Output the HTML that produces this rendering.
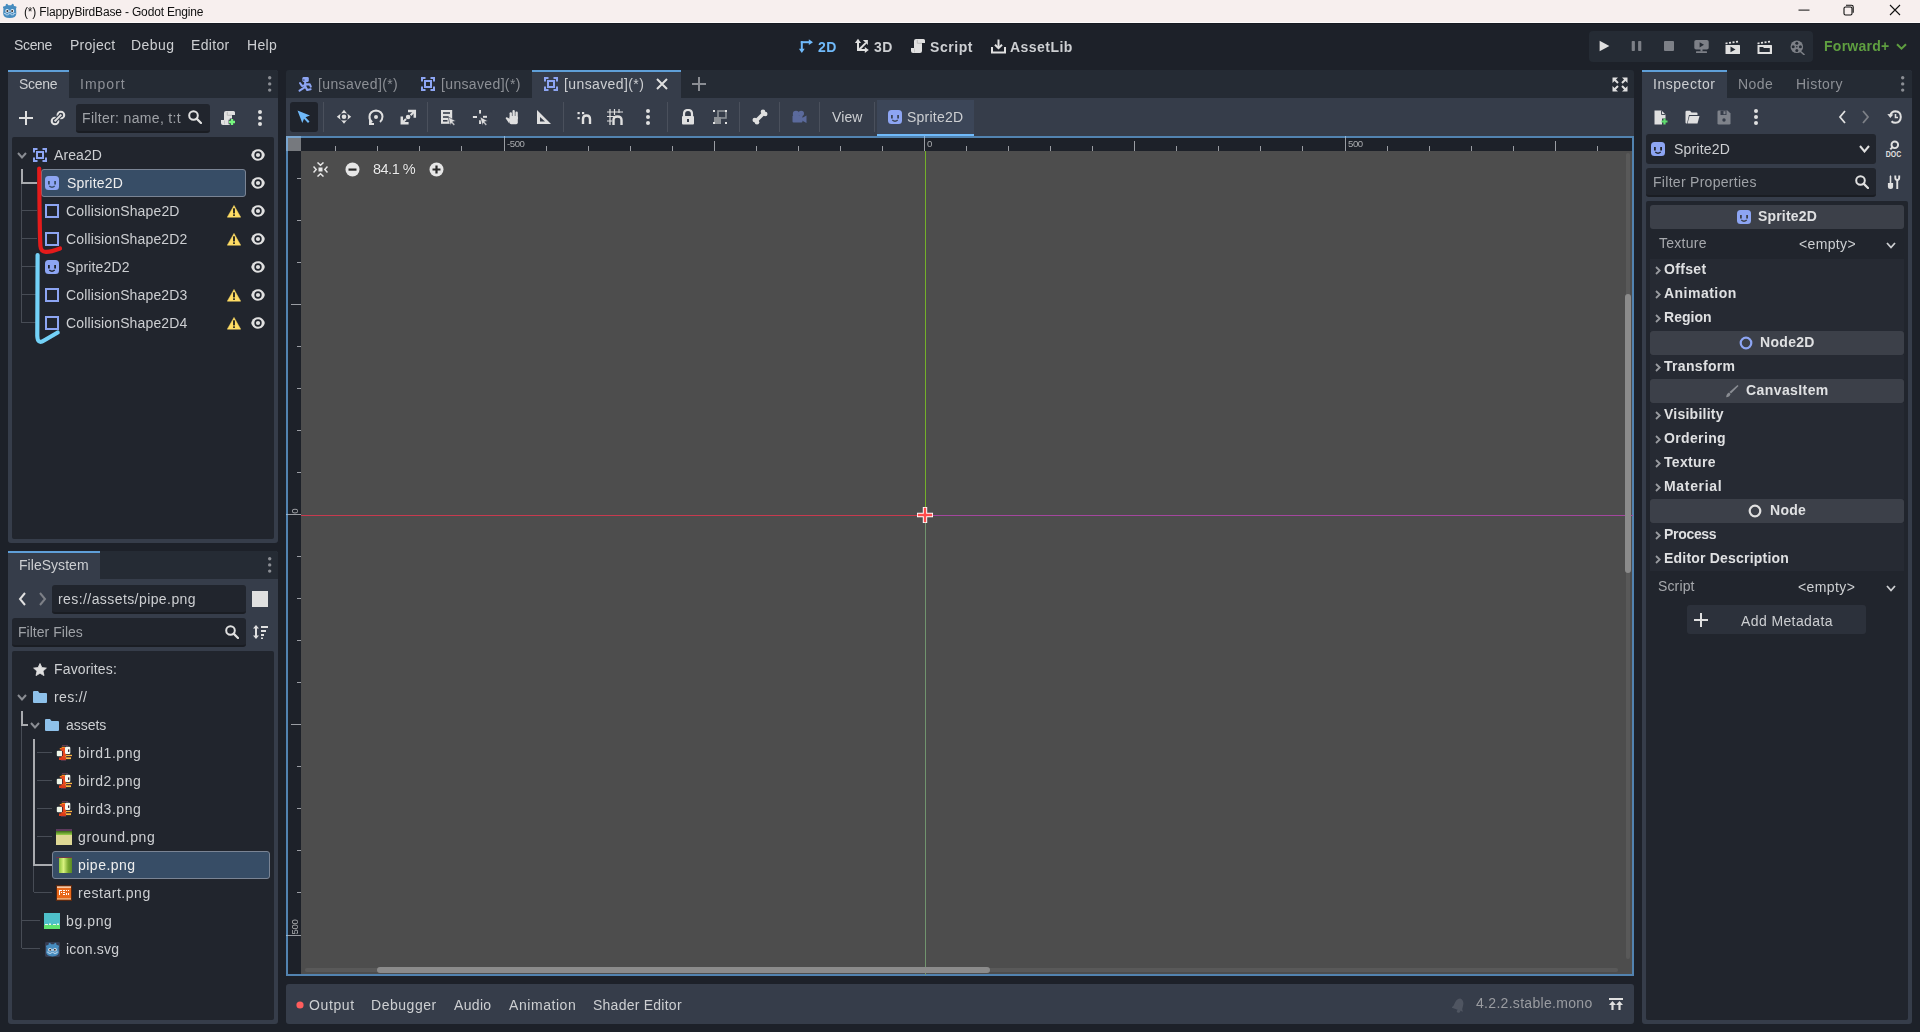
<!DOCTYPE html><html><head><meta charset="utf-8"><style>
html,body{margin:0;padding:0;width:1920px;height:1032px;overflow:hidden;background:#1d2129;}
body>div,body>svg{position:absolute;}
.t{white-space:pre;font-family:"Liberation Sans",sans-serif;will-change:transform;}
</style></head><body>
<div style="left:0px;top:0px;width:1920px;height:22px;background:#f7efee;"></div>
<div style="left:0px;top:22px;width:1920px;height:1px;background:#fdfafa;"></div>
<div style="left:0px;top:23px;width:1920px;height:1px;background:#161a21;"></div>
<div class="t" style="left:24.4px;top:5.84px;font-size:12px;line-height:12px;color:#111;font-weight:400;;letter-spacing:-0.163px;">(*) FlappyBirdBase - Godot Engine</div>
<div class="t" style="left:14.4px;top:38.15px;font-size:14px;line-height:14px;color:#cdcfd2;font-weight:400;;letter-spacing:-0.341px;">Scene</div>
<div class="t" style="left:69.5px;top:38.15px;font-size:14px;line-height:14px;color:#cdcfd2;font-weight:400;;letter-spacing:0.246px;">Project</div>
<div class="t" style="left:131.2px;top:38.15px;font-size:14px;line-height:14px;color:#cdcfd2;font-weight:400;;letter-spacing:0.447px;">Debug</div>
<div class="t" style="left:191.4px;top:38.15px;font-size:14px;line-height:14px;color:#cdcfd2;font-weight:400;;letter-spacing:0.337px;">Editor</div>
<div class="t" style="left:247.2px;top:38.15px;font-size:14px;line-height:14px;color:#cdcfd2;font-weight:400;;letter-spacing:0.326px;">Help</div>
<div class="t" style="left:818.3px;top:40.15px;font-size:14px;line-height:14px;color:#70bafa;font-weight:700;;letter-spacing:0.397px;">2D</div>
<div class="t" style="left:874px;top:40.15px;font-size:14px;line-height:14px;color:#cdcfd2;font-weight:700;;letter-spacing:0.547px;">3D</div>
<div class="t" style="left:930px;top:40.15px;font-size:14px;line-height:14px;color:#cdcfd2;font-weight:700;;letter-spacing:0.552px;">Script</div>
<div class="t" style="left:1010px;top:40.15px;font-size:14px;line-height:14px;color:#cdcfd2;font-weight:700;;letter-spacing:0.459px;">AssetLib</div>
<div style="left:1589px;top:31px;width:224px;height:31px;background:#252b34;border-radius:4px;"></div>
<div class="t" style="left:1823.5px;top:39.45px;font-size:14px;line-height:14px;color:#5f9f40;font-weight:700;;letter-spacing:0.262px;">Forward+</div>
<div style="left:8px;top:70px;width:270px;height:473px;background:#363d4a;border-radius:3px;"></div>
<div style="left:8px;top:70px;width:270px;height:28px;background:#252b34;border-radius:3px 3px 0 0;"></div>
<div style="left:8px;top:70px;width:61px;height:28px;background:#363d4a;"></div>
<div style="left:8px;top:70px;width:61px;height:2px;background:#5f9fd8;"></div>
<div class="t" style="left:19.2px;top:77.15px;font-size:14px;line-height:14px;color:#cdcfd2;font-weight:400;;letter-spacing:-0.301px;">Scene</div>
<div class="t" style="left:80px;top:77.15px;font-size:14px;line-height:14px;color:#8d9096;font-weight:400;;letter-spacing:1.002px;">Import</div>
<div style="left:76px;top:104px;width:134px;height:29px;background:#21252d;border-radius:3px;border-bottom:2px solid #1a1d23;box-sizing:border-box;"></div>
<div class="t" style="left:82.3px;top:111.35px;font-size:14px;line-height:14px;color:#9fa2a7;font-weight:400;;letter-spacing:0.332px;">Filter: name, t:t</div>
<div style="left:12px;top:137px;width:262px;height:402px;background:#21252d;border-radius:2px;"></div>
<div style="left:41px;top:169px;width:205px;height:28px;background:#374d66;border:1px solid #7a8494;border-radius:3px;box-sizing:border-box;"></div>
<div class="t" style="left:54px;top:147.65px;font-size:14px;line-height:14px;color:#cdcfd2;font-weight:400;;letter-spacing:0.089px;">Area2D</div>
<div class="t" style="left:66.5px;top:175.65px;font-size:14px;line-height:14px;color:#eeeeee;font-weight:400;;letter-spacing:0.191px;">Sprite2D</div>
<div class="t" style="left:66.4px;top:203.65px;font-size:14px;line-height:14px;color:#cdcfd2;font-weight:400;;letter-spacing:0.144px;">CollisionShape2D</div>
<div class="t" style="left:66.4px;top:231.65px;font-size:14px;line-height:14px;color:#cdcfd2;font-weight:400;;letter-spacing:0.137px;">CollisionShape2D2</div>
<div class="t" style="left:66.4px;top:259.65px;font-size:14px;line-height:14px;color:#cdcfd2;font-weight:400;;letter-spacing:0.159px;">Sprite2D2</div>
<div class="t" style="left:66.4px;top:287.65px;font-size:14px;line-height:14px;color:#cdcfd2;font-weight:400;;letter-spacing:0.137px;">CollisionShape2D3</div>
<div class="t" style="left:66.4px;top:315.65px;font-size:14px;line-height:14px;color:#cdcfd2;font-weight:400;;letter-spacing:0.137px;">CollisionShape2D4</div>
<div style="left:8px;top:551px;width:270px;height:473px;background:#363d4a;border-radius:3px;"></div>
<div style="left:8px;top:551px;width:270px;height:28px;background:#252b34;border-radius:3px 3px 0 0;"></div>
<div style="left:8px;top:551px;width:92px;height:28px;background:#363d4a;"></div>
<div style="left:8px;top:551px;width:92px;height:2px;background:#5f9fd8;"></div>
<div class="t" style="left:19px;top:558.35px;font-size:14px;line-height:14px;color:#cdcfd2;font-weight:400;;letter-spacing:0.037px;">FileSystem</div>
<div style="left:52px;top:585px;width:194px;height:29px;background:#21252d;border-radius:3px;border-bottom:2px solid #1a1d23;box-sizing:border-box;"></div>
<div class="t" style="left:58.2px;top:592.45px;font-size:14px;line-height:14px;color:#cdcfd2;font-weight:400;;letter-spacing:0.420px;">res://assets/pipe.png</div>
<div style="left:252px;top:591px;width:16px;height:16px;background:#e0e0e0;"></div>
<div style="left:12px;top:618px;width:234px;height:29px;background:#21252d;border-radius:3px;border-bottom:2px solid #1a1d23;box-sizing:border-box;"></div>
<div class="t" style="left:18.4px;top:625.35px;font-size:14px;line-height:14px;color:#9fa2a7;font-weight:400;;letter-spacing:0.028px;">Filter Files</div>
<div style="left:12px;top:651px;width:262px;height:369px;background:#21252d;border-radius:2px;"></div>
<div style="left:52px;top:851px;width:218px;height:28px;background:#374d66;border:1px solid #7a8494;border-radius:3px;box-sizing:border-box;"></div>
<div class="t" style="left:54.3px;top:661.65px;font-size:14px;line-height:14px;color:#cdcfd2;font-weight:400;;letter-spacing:0.153px;">Favorites:</div>
<div class="t" style="left:54.3px;top:689.65px;font-size:14px;line-height:14px;color:#cdcfd2;font-weight:400;;letter-spacing:0.362px;">res://</div>
<div class="t" style="left:66.3px;top:717.65px;font-size:14px;line-height:14px;color:#cdcfd2;font-weight:400;;letter-spacing:-0.028px;">assets</div>
<div class="t" style="left:78.1px;top:745.65px;font-size:14px;line-height:14px;color:#cdcfd2;font-weight:400;;letter-spacing:0.557px;">bird1.png</div>
<div class="t" style="left:78.1px;top:773.65px;font-size:14px;line-height:14px;color:#cdcfd2;font-weight:400;;letter-spacing:0.557px;">bird2.png</div>
<div class="t" style="left:78.1px;top:801.65px;font-size:14px;line-height:14px;color:#cdcfd2;font-weight:400;;letter-spacing:0.557px;">bird3.png</div>
<div class="t" style="left:78.1px;top:829.65px;font-size:14px;line-height:14px;color:#cdcfd2;font-weight:400;;letter-spacing:0.666px;">ground.png</div>
<div class="t" style="left:78.1px;top:857.65px;font-size:14px;line-height:14px;color:#eeeeee;font-weight:400;;letter-spacing:0.485px;">pipe.png</div>
<div class="t" style="left:78.1px;top:885.65px;font-size:14px;line-height:14px;color:#cdcfd2;font-weight:400;;letter-spacing:0.524px;">restart.png</div>
<div class="t" style="left:66.1px;top:913.65px;font-size:14px;line-height:14px;color:#cdcfd2;font-weight:400;;letter-spacing:0.595px;">bg.png</div>
<div class="t" style="left:66.1px;top:941.65px;font-size:14px;line-height:14px;color:#cdcfd2;font-weight:400;;letter-spacing:0.243px;">icon.svg</div>
<div style="left:286px;top:70px;width:1348px;height:28px;background:#252b34;border-radius:3px 3px 0 0;"></div>
<div style="left:532px;top:70px;width:149px;height:28px;background:#363d4a;"></div>
<div style="left:532px;top:70px;width:149px;height:2px;background:#5f9fd8;"></div>
<div class="t" style="left:317.6px;top:76.55px;font-size:14px;line-height:14px;color:#8d9096;font-weight:400;;letter-spacing:0.385px;">[unsaved](*)</div>
<div class="t" style="left:440.7px;top:76.55px;font-size:14px;line-height:14px;color:#8d9096;font-weight:400;;letter-spacing:0.351px;">[unsaved](*)</div>
<div class="t" style="left:563.7px;top:76.55px;font-size:14px;line-height:14px;color:#cdcfd2;font-weight:400;;letter-spacing:0.393px;">[unsaved](*)</div>
<div style="left:286px;top:98px;width:1348px;height:38px;background:#363d4a;"></div>
<div style="left:290px;top:102px;width:28px;height:30px;background:#1f232b;border-radius:3px;"></div>
<div style="left:323px;top:102px;width:1px;height:30px;background:#4a505c;"></div>
<div style="left:427px;top:102px;width:1px;height:30px;background:#4a505c;"></div>
<div style="left:563px;top:102px;width:1px;height:30px;background:#4a505c;"></div>
<div style="left:667px;top:102px;width:1px;height:30px;background:#4a505c;"></div>
<div style="left:739px;top:102px;width:1px;height:30px;background:#4a505c;"></div>
<div style="left:779px;top:102px;width:1px;height:30px;background:#4a505c;"></div>
<div style="left:819px;top:102px;width:1px;height:30px;background:#4a505c;"></div>
<div style="left:874px;top:102px;width:1px;height:30px;background:#4a505c;"></div>
<div class="t" style="left:832.2px;top:110.15px;font-size:14px;line-height:14px;color:#cdcfd2;font-weight:400;;letter-spacing:0.102px;">View</div>
<div style="left:877px;top:100px;width:97px;height:36px;background:#3c4658;"></div>
<div style="left:877px;top:134px;width:97px;height:2px;background:#70bafa;"></div>
<div class="t" style="left:907px;top:110.15px;font-size:14px;line-height:14px;color:#cdcfd2;font-weight:400;;letter-spacing:0.241px;">Sprite2D</div>
<div style="left:286px;top:136px;width:1348px;height:840px;background:#5283b0;"></div>
<div style="left:288px;top:138px;width:1344px;height:836px;background:#4d4d4d;"></div>
<div style="left:288px;top:138px;width:1344px;height:13px;background:#1d2129;"></div>
<div style="left:288px;top:138px;width:13px;height:836px;background:#1d2129;"></div>
<div style="left:288px;top:138px;width:13px;height:13px;background:#76797e;"></div>
<div style="left:286px;top:136px;width:15px;height:2px;background:#79a5cf;"></div>
<div style="left:286px;top:136px;width:2px;height:15px;background:#79a5cf;"></div>
<div style="left:286px;top:984px;width:1348px;height:40px;background:#363d4a;border-radius:3px;"></div>
<div class="t" style="left:308.7px;top:997.95px;font-size:14px;line-height:14px;color:#cdcfd2;font-weight:400;;letter-spacing:0.611px;">Output</div>
<div class="t" style="left:371.2px;top:997.95px;font-size:14px;line-height:14px;color:#cdcfd2;font-weight:400;;letter-spacing:0.525px;">Debugger</div>
<div class="t" style="left:454px;top:997.95px;font-size:14px;line-height:14px;color:#cdcfd2;font-weight:400;;letter-spacing:0.338px;">Audio</div>
<div class="t" style="left:509px;top:997.95px;font-size:14px;line-height:14px;color:#cdcfd2;font-weight:400;;letter-spacing:0.559px;">Animation</div>
<div class="t" style="left:593px;top:997.95px;font-size:14px;line-height:14px;color:#cdcfd2;font-weight:400;;letter-spacing:0.245px;">Shader Editor</div>
<div class="t" style="left:1476.2px;top:996.05px;font-size:14px;line-height:14px;color:#9a9ca1;font-weight:400;;letter-spacing:0.306px;">4.2.2.stable.mono</div>
<div style="left:1642px;top:70px;width:270px;height:954px;background:#363d4a;border-radius:3px;"></div>
<div style="left:1642px;top:70px;width:270px;height:28px;background:#252b34;border-radius:3px 3px 0 0;"></div>
<div style="left:1642px;top:70px;width:85px;height:28px;background:#363d4a;"></div>
<div style="left:1642px;top:70px;width:85px;height:2px;background:#5f9fd8;"></div>
<div class="t" style="left:1652.9px;top:77.15px;font-size:14px;line-height:14px;color:#cdcfd2;font-weight:400;;letter-spacing:0.534px;">Inspector</div>
<div class="t" style="left:1738.2px;top:77.15px;font-size:14px;line-height:14px;color:#8d9096;font-weight:400;;letter-spacing:0.433px;">Node</div>
<div class="t" style="left:1796.3px;top:77.15px;font-size:14px;line-height:14px;color:#8d9096;font-weight:400;;letter-spacing:0.477px;">History</div>
<div style="left:1646px;top:134px;width:230px;height:30px;background:#21252d;border-radius:3px;"></div>
<div class="t" style="left:1674.3px;top:141.85px;font-size:14px;line-height:14px;color:#cdcfd2;font-weight:400;;letter-spacing:0.191px;">Sprite2D</div>
<div style="left:1646px;top:168px;width:230px;height:29px;background:#21252d;border-radius:3px;border-bottom:2px solid #1a1d23;box-sizing:border-box;"></div>
<div class="t" style="left:1652.5px;top:175.45px;font-size:14px;line-height:14px;color:#9fa2a7;font-weight:400;;letter-spacing:0.288px;">Filter Properties</div>
<div style="left:1646px;top:201px;width:262px;height:819px;background:#21252d;border-radius:2px;"></div>
<svg style="left:2px;top:3px" width="15.5" height="15.5" viewBox="0 0 16 16"><g transform="translate(0,0)"><path d="M1.5 5.8 Q0.2 3.8 2.2 3.4 L3.6 3.2 Q3.7 0.6 5.3 0.7 L6.6 2.3 H9.4 L10.7 0.7 Q12.3 0.6 12.4 3.2 L13.8 3.4 Q15.8 3.8 14.5 5.8 L14.8 11 Q14.6 15.3 8 15.4 Q1.4 15.3 1.2 11 Z" fill="#478cbf"/><circle cx="5.3" cy="8.2" r="1.9" fill="#e8f0f8"/><circle cx="10.7" cy="8.2" r="1.9" fill="#e8f0f8"/><circle cx="5.5" cy="8.3" r="1" fill="#332b2b"/><circle cx="10.5" cy="8.3" r="1" fill="#332b2b"/><rect x="7.3" y="7.6" width="1.4" height="1.8" fill="#b8d4ec"/><path d="M2 10.8 H4 V12.2 H6.5 V11 H9.5 V12.2 H12 V10.8 H14" fill="none" stroke="#b8d4ec" stroke-width="1"/></g></svg>
<svg style="left:1798px;top:9px;" width="12" height="2" viewBox="0 0 12 2"><rect x="0.5" y="0.6" width="11" height="1" fill="#111"/></svg>
<svg style="left:1843px;top:4px;" width="11" height="12" viewBox="0 0 11 12"><rect x="1" y="3" width="8" height="8" rx="1.5" fill="none" stroke="#111" stroke-width="1.1"/><path d="M3 1.2 H8.5 Q10.2 1.2 10.2 3 V8.8" fill="none" stroke="#111" stroke-width="1.1"/></svg>
<svg style="left:1889px;top:4px;" width="12" height="12" viewBox="0 0 12 12"><path d="M1 1 L11 11 M11 1 L1 11" stroke="#111" stroke-width="1.1"/></svg>
<svg style="left:797px;top:37px;" width="17" height="17" viewBox="0 0 17 17"><g fill="#70bafa"><rect x="3.8" y="4.2" width="2" height="8.5"/><rect x="3.8" y="4.2" width="8.8" height="2"/><path d="M1.9 11.8 H7.7 L4.8 16 Z"/><path d="M11.8 2.3 V8.1 L16 5.2 Z"/></g></svg>
<svg style="left:852px;top:37px;" width="17" height="17" viewBox="0 0 17 17"><g fill="#e0e0e0"><rect x="5" y="5.5" width="2" height="8.5"/><path d="M2.9 6 H9 L6 1.8 Z"/><rect x="5" y="12" width="8.2" height="2"/><path d="M12.8 10 V16 L16.8 13 Z"/><path d="M6.8 11.6 L13.2 5.2 L14.6 6.6 L8.2 13 Z"/><path d="M15.9 3 V8 L10.9 3 Z"/></g></svg>
<svg style="left:910px;top:38px;" width="17" height="17" viewBox="0 0 17 17"><path d="M4 3 Q4 1 6 1 H13.5 Q15 1 15 2.6 V5 H12 V13 Q12 15 10 15 H3 Q1 15 1 13 V10 H4 Z" fill="#e0e0e0"/><path d="M7.3 1.8 V5.3 H12" fill="none" stroke="#b9b9b9" stroke-width="0.9"/><path d="M4.5 10.6 V14.4" stroke="#c4c4c4" stroke-width="0.9"/></svg>
<svg style="left:991px;top:39px;" width="15" height="15" viewBox="0 0 15 15"><g fill="none" stroke="#e0e0e0" stroke-width="2"><path d="M7.5 0.5 V9"/><path d="M4 5.8 L7.5 9.2 L11 5.8"/><path d="M1 8 V13.5 H14 V8"/></g></svg>
<svg style="left:1599px;top:40px;" width="11" height="12" viewBox="0 0 11 12"><path d="M0.6 0.8 L10.4 6 L0.6 11.2 Z" fill="#e0e0e0"/></svg>
<svg style="left:1631px;top:41px;" width="11" height="10" viewBox="0 0 11 10"><rect x="0.7" y="0" width="3.2" height="10" rx="0.8" fill="#7d8087"/><rect x="7.1" y="0" width="3.2" height="10" rx="0.8" fill="#7d8087"/></svg>
<svg style="left:1664px;top:41px;" width="10" height="10" viewBox="0 0 10 10"><rect x="0" y="0" width="10" height="10" rx="1" fill="#7d8087"/></svg>
<svg style="left:1693.5px;top:40px;" width="15" height="13" viewBox="0 0 15 13"><rect x="0.3" y="0" width="14.4" height="9.5" rx="1.8" fill="#7d8087"/><path d="M5.6 2.2 L10 4.8 L5.6 7.4Z" fill="#252b34"/><rect x="6.5" y="9" width="2" height="2.5" fill="#7d8087"/><rect x="2" y="11.2" width="11" height="1.8" rx="0.5" fill="#7d8087"/></svg>
<svg style="left:1725px;top:39.5px;" width="16" height="14" viewBox="0 0 16 14"><g fill="#e0e0e0"><rect x="0.5" y="2.5" width="2" height="1.7" transform="rotate(-8 1.5 3.3)"/><rect x="4" y="1.9" width="2" height="1.7" transform="rotate(-8 5 2.7)"/><rect x="7.5" y="1.4" width="2" height="1.7" transform="rotate(-8 8.5 2.2)"/><rect x="11" y="0.9" width="2" height="1.7" transform="rotate(-8 12 1.7)"/><rect x="0.5" y="5" width="14.5" height="9" rx="0.5"/></g><path d="M5.5 6.6 L10.5 9.4 L5.5 12.2Z" fill="#252b34"/></svg>
<svg style="left:1757px;top:39.5px;" width="16" height="14" viewBox="0 0 16 14"><g fill="#e0e0e0"><rect x="0.5" y="2.5" width="2" height="1.7" transform="rotate(-8 1.5 3.3)"/><rect x="4" y="1.9" width="2" height="1.7" transform="rotate(-8 5 2.7)"/><rect x="7.5" y="1.4" width="2" height="1.7" transform="rotate(-8 8.5 2.2)"/><rect x="11" y="0.9" width="2" height="1.7" transform="rotate(-8 12 1.7)"/><rect x="0.5" y="5" width="14.5" height="9" rx="0.5"/></g><path d="M2.5 7 H6 L7 8 H12.8 V12 H2.5 Z" fill="#252b34"/></svg>
<svg style="left:1790px;top:39.5px;" width="15" height="15" viewBox="0 0 15 15"><circle cx="6.8" cy="6.8" r="6.3" fill="#7d8087"/><g fill="#252b34"><circle cx="6.8" cy="3.2" r="1.5"/><circle cx="6.8" cy="10.4" r="1.5"/><circle cx="3.2" cy="6.8" r="1.5"/><circle cx="10.4" cy="6.8" r="1.5"/><circle cx="6.8" cy="6.8" r="0.8"/></g><path d="M10.5 11.5 L14 14.5" stroke="#7d8087" stroke-width="1.6" stroke-linecap="round"/></svg>
<svg style="left:1896px;top:42.5px;" width="12" height="8" viewBox="0 0 12 8"><path d="M1 1.2 L5.5 5.7 L10 1.2" fill="none" stroke="#5f9f40" stroke-width="2"/></svg>
<svg style="left:267.3px;top:75.1px;" width="5.4" height="17.8" viewBox="0 0 5.4 17.8"><g fill="#8b8e94"><circle cx="2.7" cy="2.7" r="1.7"/><circle cx="2.7" cy="8.9" r="1.7"/><circle cx="2.7" cy="15.100000000000001" r="1.7"/></g></svg>
<svg style="left:19px;top:111px;" width="14" height="14" viewBox="0 0 14 14"><path d="M7.0 0 V14 M0 7.0 H14" stroke="#e0e0e0" stroke-width="2"/></svg>
<svg style="left:50px;top:110px;" width="16" height="16" viewBox="0 0 16 16"><g fill="none" stroke="#e0e0e0" stroke-width="2.1"><circle cx="10.9" cy="5" r="3.3"/><circle cx="5" cy="11" r="3.3"/></g><path d="M4.6 11.4 L11.3 4.6" stroke="#363d4a" stroke-width="4"/><path d="M4.6 11.4 L11.3 4.6" stroke="#e0e0e0" stroke-width="2"/></svg>
<svg style="left:188.3px;top:110.4px;" width="14" height="14" viewBox="0 0 14 14"><circle cx="5.5" cy="5.5" r="4.3" fill="none" stroke="#e0e0e0" stroke-width="2"/><path d="M8.6 8.6 L13 13" stroke="#e0e0e0" stroke-width="2.2" stroke-linecap="round"/></svg>
<svg style="left:220px;top:110px;" width="17" height="17" viewBox="0 0 17 17"><path d="M4 3 Q4 1 6 1 H13.5 Q15 1 15 2.6 V5 H12 V13 Q12 15 10 15 H3 Q1 15 1 13 V10 H4 Z" fill="#e0e0e0"/><path d="M7.3 1.8 V5.3 H12" fill="none" stroke="#b9b9b9" stroke-width="0.9"/><path d="M4.5 10.6 V14.4" stroke="#c4c4c4" stroke-width="0.9"/><path d="M12 8.6 V15.4 M8.6 12 H15.4" stroke="#363d4a" stroke-width="4.4"/><path d="M12 9 V15 M9 12 H15" stroke="#77f77f" stroke-width="2.3"/></svg>
<svg style="left:257px;top:109px;" width="6" height="18" viewBox="0 0 6 18"><g fill="#e0e0e0"><circle cx="3" cy="3" r="2"/><circle cx="3" cy="9" r="2"/><circle cx="3" cy="15" r="2"/></g></svg>
<div style="left:21px;top:184px;width:1px;height:139px;background:#474c55;"></div>
<div style="left:22px;top:210px;width:15px;height:1px;background:#474c55;"></div>
<div style="left:22px;top:238px;width:15px;height:1px;background:#474c55;"></div>
<div style="left:22px;top:266px;width:15px;height:1px;background:#474c55;"></div>
<div style="left:22px;top:294px;width:15px;height:1px;background:#474c55;"></div>
<div style="left:22px;top:322px;width:15px;height:1px;background:#474c55;"></div>
<div style="left:21px;top:169px;width:2px;height:15px;background:#a9abaf;"></div>
<div style="left:21px;top:182px;width:16px;height:2px;background:#a9abaf;"></div>
<svg style="left:17px;top:151.5px;" width="10" height="7" viewBox="0 0 10 7"><path d="M1 1 L5.0 5.5 L9 1" fill="none" stroke="#8a8d93" stroke-width="2"/></svg>
<svg style="left:33px;top:148px;" width="14" height="14" viewBox="0 0 14 14"><g fill="#8da5f3"><rect x="0" y="0" width="4.5" height="2"/><rect x="0" y="0" width="2" height="4.5"/><rect x="9.5" y="0" width="4.5" height="2"/><rect x="12" y="0" width="2" height="4.5"/><rect x="0" y="12" width="4.5" height="2"/><rect x="0" y="9.5" width="2" height="4.5"/><rect x="9.5" y="12" width="4.5" height="2"/><rect x="12" y="9.5" width="2" height="4.5"/></g><rect x="4" y="4" width="6" height="6" fill="none" stroke="#8da5f3" stroke-width="2"/></svg>
<svg style="left:251px;top:149px;" width="14" height="12" viewBox="0 0 14 12"><path d="M0.2 6 C2 -1.6, 12 -1.6, 13.8 6 C12 13.6, 2 13.6, 0.2 6 Z" fill="#e0e0e0"/><circle cx="7" cy="6" r="3.7" fill="#21252d"/><circle cx="7" cy="6" r="2.1" fill="#e0e0e0"/></svg>
<svg style="left:45px;top:176px;" width="14" height="14" viewBox="0 0 14 14"><rect x="0" y="0" width="14" height="14" rx="3.5" fill="#8da5f3"/><rect x="3" y="5" width="1.8" height="3.5" fill="#374d66"/><rect x="9.2" y="5" width="1.8" height="3.5" fill="#374d66"/><path d="M4.3 10 Q7 12.4 9.7 10" fill="none" stroke="#374d66" stroke-width="1.5"/></svg>
<svg style="left:251px;top:177px;" width="14" height="12" viewBox="0 0 14 12"><path d="M0.2 6 C2 -1.6, 12 -1.6, 13.8 6 C12 13.6, 2 13.6, 0.2 6 Z" fill="#e0e0e0"/><circle cx="7" cy="6" r="3.7" fill="#21252d"/><circle cx="7" cy="6" r="2.1" fill="#e0e0e0"/></svg>
<svg style="left:45px;top:204px;" width="14" height="14" viewBox="0 0 14 14"><rect x="1" y="1" width="12" height="12" fill="none" stroke="#8da5f3" stroke-width="2"/></svg>
<svg style="left:227px;top:204.5px;" width="14" height="13" viewBox="0 0 14 13"><path d="M7 0.4 L13.7 12.2 L0.3 12.2 Z" fill="#ffdd65" stroke="#ffdd65" stroke-width="0.5" stroke-linejoin="round"/><rect x="6.1" y="3.2" width="1.8" height="5.2" rx="0.4" fill="#1a1a1a"/><rect x="6.1" y="9.3" width="1.8" height="1.7" rx="0.4" fill="#1a1a1a"/></svg>
<svg style="left:251px;top:205px;" width="14" height="12" viewBox="0 0 14 12"><path d="M0.2 6 C2 -1.6, 12 -1.6, 13.8 6 C12 13.6, 2 13.6, 0.2 6 Z" fill="#e0e0e0"/><circle cx="7" cy="6" r="3.7" fill="#21252d"/><circle cx="7" cy="6" r="2.1" fill="#e0e0e0"/></svg>
<svg style="left:45px;top:232px;" width="14" height="14" viewBox="0 0 14 14"><rect x="1" y="1" width="12" height="12" fill="none" stroke="#8da5f3" stroke-width="2"/></svg>
<svg style="left:227px;top:232.5px;" width="14" height="13" viewBox="0 0 14 13"><path d="M7 0.4 L13.7 12.2 L0.3 12.2 Z" fill="#ffdd65" stroke="#ffdd65" stroke-width="0.5" stroke-linejoin="round"/><rect x="6.1" y="3.2" width="1.8" height="5.2" rx="0.4" fill="#1a1a1a"/><rect x="6.1" y="9.3" width="1.8" height="1.7" rx="0.4" fill="#1a1a1a"/></svg>
<svg style="left:251px;top:233px;" width="14" height="12" viewBox="0 0 14 12"><path d="M0.2 6 C2 -1.6, 12 -1.6, 13.8 6 C12 13.6, 2 13.6, 0.2 6 Z" fill="#e0e0e0"/><circle cx="7" cy="6" r="3.7" fill="#21252d"/><circle cx="7" cy="6" r="2.1" fill="#e0e0e0"/></svg>
<svg style="left:45px;top:260px;" width="14" height="14" viewBox="0 0 14 14"><rect x="0" y="0" width="14" height="14" rx="3.5" fill="#8da5f3"/><rect x="3" y="5" width="1.8" height="3.5" fill="#21252d"/><rect x="9.2" y="5" width="1.8" height="3.5" fill="#21252d"/><path d="M4.3 10 Q7 12.4 9.7 10" fill="none" stroke="#21252d" stroke-width="1.5"/></svg>
<svg style="left:251px;top:261px;" width="14" height="12" viewBox="0 0 14 12"><path d="M0.2 6 C2 -1.6, 12 -1.6, 13.8 6 C12 13.6, 2 13.6, 0.2 6 Z" fill="#e0e0e0"/><circle cx="7" cy="6" r="3.7" fill="#21252d"/><circle cx="7" cy="6" r="2.1" fill="#e0e0e0"/></svg>
<svg style="left:45px;top:288px;" width="14" height="14" viewBox="0 0 14 14"><rect x="1" y="1" width="12" height="12" fill="none" stroke="#8da5f3" stroke-width="2"/></svg>
<svg style="left:227px;top:288.5px;" width="14" height="13" viewBox="0 0 14 13"><path d="M7 0.4 L13.7 12.2 L0.3 12.2 Z" fill="#ffdd65" stroke="#ffdd65" stroke-width="0.5" stroke-linejoin="round"/><rect x="6.1" y="3.2" width="1.8" height="5.2" rx="0.4" fill="#1a1a1a"/><rect x="6.1" y="9.3" width="1.8" height="1.7" rx="0.4" fill="#1a1a1a"/></svg>
<svg style="left:251px;top:289px;" width="14" height="12" viewBox="0 0 14 12"><path d="M0.2 6 C2 -1.6, 12 -1.6, 13.8 6 C12 13.6, 2 13.6, 0.2 6 Z" fill="#e0e0e0"/><circle cx="7" cy="6" r="3.7" fill="#21252d"/><circle cx="7" cy="6" r="2.1" fill="#e0e0e0"/></svg>
<svg style="left:45px;top:316px;" width="14" height="14" viewBox="0 0 14 14"><rect x="1" y="1" width="12" height="12" fill="none" stroke="#8da5f3" stroke-width="2"/></svg>
<svg style="left:227px;top:316.5px;" width="14" height="13" viewBox="0 0 14 13"><path d="M7 0.4 L13.7 12.2 L0.3 12.2 Z" fill="#ffdd65" stroke="#ffdd65" stroke-width="0.5" stroke-linejoin="round"/><rect x="6.1" y="3.2" width="1.8" height="5.2" rx="0.4" fill="#1a1a1a"/><rect x="6.1" y="9.3" width="1.8" height="1.7" rx="0.4" fill="#1a1a1a"/></svg>
<svg style="left:251px;top:317px;" width="14" height="12" viewBox="0 0 14 12"><path d="M0.2 6 C2 -1.6, 12 -1.6, 13.8 6 C12 13.6, 2 13.6, 0.2 6 Z" fill="#e0e0e0"/><circle cx="7" cy="6" r="3.7" fill="#21252d"/><circle cx="7" cy="6" r="2.1" fill="#e0e0e0"/></svg>
<svg style="left:30px;top:160px;" width="40" height="190" viewBox="0 0 40 190"><path d="M9.2 8.5 C9.5 40, 9.5 70, 10.4 86 C11 94, 18 93, 30 88.5" fill="none" stroke="#e41b1b" stroke-width="4.2" stroke-linecap="round"/><path d="M7.6 95 C7.5 130, 7.2 160, 7.3 176 Q7.6 184.5, 14 180.5 L27.7 172.5" fill="none" stroke="#73d2f8" stroke-width="4.2" stroke-linecap="round" stroke-linejoin="round"/></svg>
<svg style="left:267.3px;top:556.0999999999999px;" width="5.4" height="17.8" viewBox="0 0 5.4 17.8"><g fill="#8b8e94"><circle cx="2.7" cy="2.7" r="1.7"/><circle cx="2.7" cy="8.9" r="1.7"/><circle cx="2.7" cy="15.100000000000001" r="1.7"/></g></svg>
<svg style="left:18px;top:592px;" width="9" height="14" viewBox="0 0 9 14"><path d="M7 1 L2 7 L7 13" fill="none" stroke="#e0e0e0" stroke-width="2"/></svg>
<svg style="left:38px;top:592px;" width="9" height="14" viewBox="0 0 9 14"><path d="M2 1 L7 7 L2 13" fill="none" stroke="#7d8087" stroke-width="2"/></svg>
<svg style="left:224.5px;top:624.5px;" width="14" height="14" viewBox="0 0 14 14"><circle cx="5.5" cy="5.5" r="4.3" fill="none" stroke="#e0e0e0" stroke-width="2"/><path d="M8.6 8.6 L13 13" stroke="#e0e0e0" stroke-width="2.2" stroke-linecap="round"/></svg>
<svg style="left:253px;top:625px;" width="15" height="15" viewBox="0 0 15 15"><g fill="#e0e0e0"><path d="M3 0 L6 3.5 H4 V10.5 H6 L3 14 L0 10.5 H2 V3.5 H0 Z"/><rect x="8" y="1" width="7" height="2"/><rect x="8" y="5" width="5" height="2"/><rect x="8" y="9" width="3" height="2"/><rect x="8" y="12.5" width="2" height="1.5"/></g></svg>
<svg style="left:33px;top:662.5px;" width="14" height="14" viewBox="0 0 14 14"><path d="M7 0.5 L8.9 4.6 L13.4 5.1 L10 8.1 L11 12.6 L7 10.3 L3 12.6 L4 8.1 L0.6 5.1 L5.1 4.6 Z" fill="#e0e0e0" stroke="#e0e0e0" stroke-width="0.8" stroke-linejoin="round"/></svg>
<svg style="left:17px;top:694px;" width="10" height="7" viewBox="0 0 10 7"><path d="M1 1 L5.0 5.5 L9 1" fill="none" stroke="#8a8d93" stroke-width="2"/></svg>
<svg style="left:33px;top:691px;" width="14" height="12" viewBox="0 0 14 12"><path d="M0 1 Q0 0 1 0 H5 L6.5 2 H13 Q14 2 14 3 V11 Q14 12 13 12 H1 Q0 12 0 11 Z" fill="#8ec1ea"/></svg>
<div style="left:21px;top:711px;width:2px;height:15px;background:#a9abaf;"></div>
<div style="left:21px;top:724px;width:7px;height:2px;background:#a9abaf;"></div>
<svg style="left:29.5px;top:722px;" width="10" height="7" viewBox="0 0 10 7"><path d="M1 1 L5.0 5.5 L9 1" fill="none" stroke="#8a8d93" stroke-width="2"/></svg>
<svg style="left:45px;top:719px;" width="14" height="12" viewBox="0 0 14 12"><path d="M0 1 Q0 0 1 0 H5 L6.5 2 H13 Q14 2 14 3 V11 Q14 12 13 12 H1 Q0 12 0 11 Z" fill="#8ec1ea"/></svg>
<div style="left:21px;top:726px;width:1px;height:222px;background:#474c55;"></div>
<div style="left:22px;top:920px;width:18px;height:1px;background:#474c55;"></div>
<div style="left:22px;top:948px;width:18px;height:1px;background:#474c55;"></div>
<div style="left:33px;top:739px;width:2px;height:127px;background:#a9abaf;"></div>
<div style="left:33px;top:864px;width:19px;height:2px;background:#a9abaf;"></div>
<div style="left:33px;top:866px;width:1px;height:26px;background:#474c55;"></div>
<div style="left:34px;top:892px;width:18px;height:1px;background:#474c55;"></div>
<div style="left:37px;top:752px;width:15px;height:1px;background:#474c55;"></div>
<div style="left:37px;top:780px;width:15px;height:1px;background:#474c55;"></div>
<div style="left:37px;top:808px;width:15px;height:1px;background:#474c55;"></div>
<div style="left:37px;top:836px;width:15px;height:1px;background:#474c55;"></div>
<svg style="left:54px;top:743px;" width="20" height="20" viewBox="0 0 20 20"><rect x="8" y="2" width="6" height="1" fill="#5a3a50"/><rect x="7.6" y="3.8" width="3.4" height="1.3" fill="#f88a20"/><rect x="5.8" y="5" width="4.8" height="1.5" fill="#f8801c"/><rect x="7.4" y="5" width="4.6" height="12" fill="#ea4a1e"/><rect x="5" y="14.4" width="7" height="2.6" fill="#e03c18"/><rect x="11" y="3.8" width="5.3" height="7.2" rx="1.2" fill="#f4f8f0"/><rect x="14" y="6.4" width="1.3" height="2.5" fill="#3a1a28"/><rect x="2.8" y="7.8" width="5.3" height="5.4" rx="1" fill="#eef6e8"/><rect x="8" y="8" width="0.8" height="5" fill="#3a1a28"/><rect x="12" y="11.8" width="6" height="1.4" fill="#f8b840"/><rect x="11" y="13.3" width="7" height="1" fill="#4a2038"/><rect x="11" y="13.3" width="1.2" height="1" fill="#f8b840"/><rect x="12" y="14.3" width="5" height="1.8" fill="#f8b840"/><rect x="7" y="16.9" width="5" height="0.9" fill="#5a3a50"/></svg>
<svg style="left:54px;top:771px;" width="20" height="20" viewBox="0 0 20 20"><rect x="8" y="2" width="6" height="1" fill="#5a3a50"/><rect x="7.6" y="3.8" width="3.4" height="1.3" fill="#f88a20"/><rect x="5.8" y="5" width="4.8" height="1.5" fill="#f8801c"/><rect x="7.4" y="5" width="4.6" height="12" fill="#ea4a1e"/><rect x="5" y="14.4" width="7" height="2.6" fill="#e03c18"/><rect x="11" y="3.8" width="5.3" height="7.2" rx="1.2" fill="#f4f8f0"/><rect x="14" y="6.4" width="1.3" height="2.5" fill="#3a1a28"/><rect x="2.8" y="7.8" width="5.3" height="5.4" rx="1" fill="#eef6e8"/><rect x="8" y="8" width="0.8" height="5" fill="#3a1a28"/><rect x="12" y="11.8" width="6" height="1.4" fill="#f8b840"/><rect x="11" y="13.3" width="7" height="1" fill="#4a2038"/><rect x="11" y="13.3" width="1.2" height="1" fill="#f8b840"/><rect x="12" y="14.3" width="5" height="1.8" fill="#f8b840"/><rect x="7" y="16.9" width="5" height="0.9" fill="#5a3a50"/></svg>
<svg style="left:54px;top:799px;" width="20" height="20" viewBox="0 0 20 20"><rect x="8" y="2" width="6" height="1" fill="#5a3a50"/><rect x="7.6" y="3.8" width="3.4" height="1.3" fill="#f88a20"/><rect x="5.8" y="5" width="4.8" height="1.5" fill="#f8801c"/><rect x="7.4" y="5" width="4.6" height="12" fill="#ea4a1e"/><rect x="5" y="14.4" width="7" height="2.6" fill="#e03c18"/><rect x="11" y="3.8" width="5.3" height="7.2" rx="1.2" fill="#f4f8f0"/><rect x="14" y="6.4" width="1.3" height="2.5" fill="#3a1a28"/><rect x="2.8" y="7.8" width="5.3" height="5.4" rx="1" fill="#eef6e8"/><rect x="8" y="8" width="0.8" height="5" fill="#3a1a28"/><rect x="12" y="11.8" width="6" height="1.4" fill="#f8b840"/><rect x="11" y="13.3" width="7" height="1" fill="#4a2038"/><rect x="11" y="13.3" width="1.2" height="1" fill="#f8b840"/><rect x="12" y="14.3" width="5" height="1.8" fill="#f8b840"/><rect x="7" y="16.9" width="5" height="0.9" fill="#5a3a50"/></svg>
<svg style="left:56px;top:829px;" width="16" height="16" viewBox="0 0 16 16"><defs><linearGradient id="gg" x1="0" y1="0" x2="0" y2="1"><stop offset="0" stop-color="#3a6a1a"/><stop offset="1" stop-color="#9ad04a"/></linearGradient></defs><rect x="0" y="0" width="16" height="16" fill="#ded895"/><rect x="0" y="0" width="16" height="2" fill="#5e3a5e"/><rect x="0" y="2" width="16" height="4" fill="url(#gg)"/></svg>
<svg style="left:56px;top:857px;" width="16" height="16" viewBox="0 0 16 16"><defs><linearGradient id="pg" x1="0" y1="0" x2="1" y2="0"><stop offset="0" stop-color="#8cc43a"/><stop offset="0.35" stop-color="#d8f27e"/><stop offset="0.7" stop-color="#7aaa30"/><stop offset="1" stop-color="#5a8a24"/></linearGradient></defs><rect x="0" y="0" width="16" height="1.2" fill="#70384a"/><rect x="3" y="1" width="13" height="15" fill="url(#pg)"/></svg>
<svg style="left:56px;top:885px;" width="16" height="16" viewBox="0 0 16 16"><rect x="0" y="0" width="16" height="16" fill="#5a2810"/><rect x="1" y="1.5" width="14" height="13" fill="#e8681a"/><rect x="1" y="1.5" width="14" height="1.2" fill="#fff1e0"/><rect x="1" y="13.3" width="14" height="1.2" fill="#f0c090"/><g fill="#fff"><rect x="3" y="5" width="1" height="5"/><rect x="4" y="5" width="2" height="1"/><rect x="5" y="7" width="1" height="1"/><rect x="7" y="5" width="2" height="1"/><rect x="7" y="7" width="2" height="1"/><rect x="7" y="9" width="2" height="1"/><rect x="10" y="5" width="1" height="1"/><rect x="12" y="5" width="1" height="1"/><rect x="10" y="8" width="1" height="2"/><rect x="12" y="8" width="1" height="2"/></g></svg>
<svg style="left:44px;top:913px;" width="16" height="16" viewBox="0 0 16 16"><rect x="0" y="0" width="16" height="16" fill="#4ec0ca"/><rect x="0" y="12" width="16" height="4" fill="#5ee270"/><g fill="#e4fae4"><rect x="1" y="11" width="3" height="1"/><rect x="5" y="10.5" width="2" height="1.5"/><rect x="9" y="11" width="3" height="1"/><rect x="13" y="10.5" width="2" height="1.5"/></g></svg>
<svg style="left:45px;top:942px" width="15" height="15" viewBox="0 0 16 16"><rect x="0" y="0" width="16" height="16" rx="1.5" fill="#363d52"/><g transform="translate(0,0)"><path d="M1.5 5.8 Q0.2 3.8 2.2 3.4 L3.6 3.2 Q3.7 0.6 5.3 0.7 L6.6 2.3 H9.4 L10.7 0.7 Q12.3 0.6 12.4 3.2 L13.8 3.4 Q15.8 3.8 14.5 5.8 L14.8 11 Q14.6 15.3 8 15.4 Q1.4 15.3 1.2 11 Z" fill="#478cbf"/><circle cx="5.3" cy="8.2" r="1.9" fill="#e8f0f8"/><circle cx="10.7" cy="8.2" r="1.9" fill="#e8f0f8"/><circle cx="5.5" cy="8.3" r="1" fill="#332b2b"/><circle cx="10.5" cy="8.3" r="1" fill="#332b2b"/><rect x="7.3" y="7.6" width="1.4" height="1.8" fill="#b8d4ec"/><path d="M2 10.8 H4 V12.2 H6.5 V11 H9.5 V12.2 H12 V10.8 H14" fill="none" stroke="#b8d4ec" stroke-width="1"/></g></svg>
<svg style="left:297px;top:75px;" width="17" height="17" viewBox="0 0 17 17"><rect x="5.4" y="1.9" width="6.4" height="5" rx="1.3" fill="#8da5f3"/><rect x="6" y="4.3" width="1.6" height="1.5" fill="#4a5680"/><g fill="none" stroke="#8da5f3" stroke-width="2.1" stroke-linecap="round" stroke-linejoin="round"><path d="M8.2 7 V12.2"/><path d="M3 8 L5 11 L8.2 10.2"/><path d="M8.2 9.4 H12.8 L13.8 11.6"/><path d="M8 12.2 L2.6 15.6"/><path d="M8.6 12 L10.2 15 L13.6 14.2"/></g></svg>
<svg style="left:421px;top:77px;" width="14" height="14" viewBox="0 0 14 14"><g fill="#8da5f3"><rect x="0" y="0" width="4.5" height="2"/><rect x="0" y="0" width="2" height="4.5"/><rect x="9.5" y="0" width="4.5" height="2"/><rect x="12" y="0" width="2" height="4.5"/><rect x="0" y="12" width="4.5" height="2"/><rect x="0" y="9.5" width="2" height="4.5"/><rect x="9.5" y="12" width="4.5" height="2"/><rect x="12" y="9.5" width="2" height="4.5"/></g><rect x="4" y="4" width="6" height="6" fill="none" stroke="#8da5f3" stroke-width="2"/></svg>
<svg style="left:544px;top:77px;" width="14" height="14" viewBox="0 0 14 14"><g fill="#8da5f3"><rect x="0" y="0" width="4.5" height="2"/><rect x="0" y="0" width="2" height="4.5"/><rect x="9.5" y="0" width="4.5" height="2"/><rect x="12" y="0" width="2" height="4.5"/><rect x="0" y="12" width="4.5" height="2"/><rect x="0" y="9.5" width="2" height="4.5"/><rect x="9.5" y="12" width="4.5" height="2"/><rect x="12" y="9.5" width="2" height="4.5"/></g><rect x="4" y="4" width="6" height="6" fill="none" stroke="#8da5f3" stroke-width="2"/></svg>
<svg style="left:656px;top:78px;" width="12" height="12" viewBox="0 0 12 12"><path d="M1 1 L11 11 M11 1 L1 11" stroke="#e0e0e0" stroke-width="2"/></svg>
<svg style="left:692px;top:77px;" width="14" height="14" viewBox="0 0 14 14"><path d="M7.0 0 V14 M0 7.0 H14" stroke="#8a8d93" stroke-width="2"/></svg>
<svg style="left:1612px;top:76.5px;" width="16" height="15" viewBox="0 0 16 15"><g fill="#e0e0e0"><path d="M0.5 0.5 H6 L0.5 6 Z"/><path d="M15.5 0.5 H10 L15.5 6 Z"/><path d="M0.5 14.5 H6 L0.5 9 Z"/><path d="M15.5 14.5 H10 L15.5 9 Z"/></g><g stroke="#e0e0e0" stroke-width="2"><path d="M2.5 2.5 L6 6 M13.5 2.5 L10 6 M2.5 12.5 L6 9 M13.5 12.5 L10 9"/></g></svg>
<svg style="left:296px;top:109px;" width="16" height="16" viewBox="0 0 16 16"><path d="M1.5 1.5 L14 6.5 L9.5 8.2 L13.5 12.5 L12 14 L8 9.8 L6.3 14 Z" fill="#70bafa"/></svg>
<svg style="left:336px;top:109px;" width="16" height="16" viewBox="0 0 16 16"><circle cx="8" cy="7.8" r="2.3" fill="#e0e0e0"/><g fill="#e0e0e0"><path d="M5 4.6 L8 0.8 L11 4.6 Q8 3.4 5 4.6 Z"/><path d="M5 11 L8 14.8 L11 11 Q8 12.2 5 11 Z"/><path d="M4.6 4.8 L0.8 7.8 L4.6 10.8 Q3.4 7.8 4.6 4.8 Z"/><path d="M11.4 4.8 L15.2 7.8 L11.4 10.8 Q12.6 7.8 11.4 4.8 Z"/></g></svg>
<svg style="left:368px;top:109px;" width="16" height="16" viewBox="0 0 16 16"><path d="M4.2 13.2 Q1.2 11 1.5 7.5 Q2 2 8 1.5 Q14 2 14.5 7.5 Q14.5 11 12 13" fill="none" stroke="#e0e0e0" stroke-width="2"/><path d="M2 11 L2 15 L6 15" fill="none" stroke="#e0e0e0" stroke-width="2"/><circle cx="8" cy="8" r="2" fill="#e0e0e0"/></svg>
<svg style="left:400px;top:109px;" width="17" height="17" viewBox="0 0 17 17"><circle cx="8.1" cy="8" r="2.3" fill="#e0e0e0"/><g fill="none" stroke="#e0e0e0" stroke-width="2.5"><path d="M8 2 H14.8 V8.8"/><path d="M1.8 7.4 V14.2 H8.6"/></g><path d="M14.5 2.3 L10.6 6.2 M2.1 13.9 L6 10" stroke="#e0e0e0" stroke-width="2.1"/></svg>
<svg style="left:440px;top:109px;" width="17" height="17" viewBox="0 0 17 17"><rect x="1" y="1" width="11.2" height="13.8" fill="#e0e0e0"/><g fill="#363d4a"><rect x="3" y="3.2" width="7" height="1.6"/><rect x="3" y="7.2" width="5.5" height="1.6"/><rect x="3" y="11" width="4.5" height="1.6"/></g><path d="M8.2 7.9 L15.8 12 L12.6 12.8 L15 15.5 L13.8 16.6 L11.4 13.9 L10.3 16.6 Z" fill="#e0e0e0" stroke="#363d4a" stroke-width="0.6"/></svg>
<svg style="left:472px;top:109px;" width="17" height="17" viewBox="0 0 17 17"><g fill="#e0e0e0"><rect x="7.1" y="1" width="1.9" height="3.6"/><rect x="0.9" y="7" width="4.1" height="2"/><rect x="11" y="6.8" width="4" height="2"/><rect x="7.1" y="11.2" width="1.9" height="3.8"/></g><path d="M8.2 7.9 L15.8 12 L12.6 12.8 L15 15.5 L13.8 16.6 L11.4 13.9 L10.3 16.6 Z" fill="#e0e0e0" stroke="#363d4a" stroke-width="0.6"/></svg>
<svg style="left:504px;top:109px;" width="17" height="17" viewBox="0 0 17 17"><g fill="#e0e0e0"><rect x="5.6" y="3.2" width="2.3" height="8" rx="1.1"/><rect x="8.5" y="0.9" width="2.3" height="9" rx="1.1"/><rect x="11.4" y="2.6" width="2.4" height="8" rx="1.1"/><rect x="5.6" y="7" width="8.2" height="8.2" rx="1.6"/><path d="M6.5 10.2 L3.4 8.5 Q1.9 8 1.6 9.3 L5.2 14.6 Z"/></g></svg>
<svg style="left:536px;top:109px;" width="16" height="16" viewBox="0 0 16 16"><path d="M1 1 L15 15 H1 Z" fill="#e0e0e0"/><path d="M4 8 L9 12.5 H4 Z" fill="#363d4a"/></svg>
<svg style="left:577px;top:109px;" width="16" height="16" viewBox="0 0 16 16"><g fill="#e0e0e0"><rect x="0.5" y="3" width="2.2" height="2.2"/><rect x="0.5" y="8" width="2.2" height="2.2"/><rect x="5" y="3" width="2.2" height="2.2"/></g><path d="M6 15 V10 Q6 6.5 9.5 6.5 Q13 6.5 13 10 V15" fill="none" stroke="#e0e0e0" stroke-width="2.4"/></svg>
<svg style="left:607px;top:109px;" width="16" height="16" viewBox="0 0 16 16"><g stroke="#e0e0e0" stroke-width="1.2"><path d="M0 3 H16 M0 7.5 H7 M0 12 H5 M3 0 V16 M7.5 0 V6 M12 0 V4"/></g><path d="M6.5 16 V11 Q6.5 7.5 10.5 7.5 Q14.5 7.5 14.5 11 V16" fill="none" stroke="#e0e0e0" stroke-width="2.4"/></svg>
<svg style="left:645px;top:108px;" width="6" height="18" viewBox="0 0 6 18"><g fill="#e0e0e0"><circle cx="3" cy="3" r="2"/><circle cx="3" cy="9" r="2"/><circle cx="3" cy="15" r="2"/></g></svg>
<svg style="left:680px;top:109px;" width="16" height="16" viewBox="0 0 16 16"><path d="M4 7 V5 Q4 1 8 1 Q12 1 12 5 V7" fill="none" stroke="#e0e0e0" stroke-width="2.2"/><rect x="2" y="7" width="12" height="8.5" rx="1" fill="#e0e0e0"/><rect x="7" y="10" width="2" height="3" fill="#363d4a"/></svg>
<svg style="left:712px;top:109px;" width="16" height="16" viewBox="0 0 16 16"><rect x="6" y="2" width="8" height="7" fill="none" stroke="#8d9196" stroke-width="1.6"/><rect x="2" y="8" width="7" height="7" fill="#8d9196"/><g fill="#e0e0e0"><rect x="1" y="1" width="2" height="2"/><rect x="13" y="1" width="2" height="2"/><rect x="1" y="13" width="2" height="2"/><rect x="13" y="13" width="2" height="2"/></g></svg>
<svg style="left:752px;top:109px;" width="16" height="16" viewBox="0 0 16 16"><path d="M3.5 12.5 L12.5 3.5" stroke="#e0e0e0" stroke-width="3.5"/><g fill="#e0e0e0"><circle cx="11" cy="2.8" r="2.3"/><circle cx="13.2" cy="5" r="2.3"/><circle cx="2.8" cy="11" r="2.3"/><circle cx="5" cy="13.2" r="2.3"/></g></svg>
<svg style="left:791px;top:109px;" width="16" height="16" viewBox="0 0 16 16"><g fill="#5b6a9c"><circle cx="5" cy="5" r="3.2"/><circle cx="10.2" cy="4.5" r="2.8"/><rect x="1.5" y="6.5" width="10" height="7" rx="1"/><path d="M11 9 L15.5 6.5 V14 L11 11.5 Z"/></g></svg>
<svg style="left:888px;top:110px;" width="14" height="14" viewBox="0 0 14 14"><rect x="0" y="0" width="14" height="14" rx="3.5" fill="#8da5f3"/><rect x="3" y="5" width="1.8" height="3.5" fill="#3c4658"/><rect x="9.2" y="5" width="1.8" height="3.5" fill="#3c4658"/><path d="M4.3 10 Q7 12.4 9.7 10" fill="none" stroke="#3c4658" stroke-width="1.5"/></svg>
<div style="left:335px;top:146px;width:1px;height:5px;background:#9a9da3;"></div>
<div style="left:377px;top:146px;width:1px;height:5px;background:#9a9da3;"></div>
<div style="left:419px;top:146px;width:1px;height:5px;background:#9a9da3;"></div>
<div style="left:461px;top:146px;width:1px;height:5px;background:#9a9da3;"></div>
<div style="left:504px;top:138px;width:1px;height:13px;background:#9a9da3;"></div>
<div style="left:504px;top:136px;width:1px;height:2px;background:#8fb4d6;"></div>
<div style="left:546px;top:146px;width:1px;height:5px;background:#9a9da3;"></div>
<div style="left:588px;top:146px;width:1px;height:5px;background:#9a9da3;"></div>
<div style="left:630px;top:146px;width:1px;height:5px;background:#9a9da3;"></div>
<div style="left:672px;top:146px;width:1px;height:5px;background:#9a9da3;"></div>
<div style="left:714px;top:141px;width:1px;height:10px;background:#9a9da3;"></div>
<div style="left:756px;top:146px;width:1px;height:5px;background:#9a9da3;"></div>
<div style="left:798px;top:146px;width:1px;height:5px;background:#9a9da3;"></div>
<div style="left:840px;top:146px;width:1px;height:5px;background:#9a9da3;"></div>
<div style="left:882px;top:146px;width:1px;height:5px;background:#9a9da3;"></div>
<div style="left:924px;top:138px;width:1px;height:13px;background:#9a9da3;"></div>
<div style="left:924px;top:136px;width:1px;height:2px;background:#8fb4d6;"></div>
<div style="left:966px;top:146px;width:1px;height:5px;background:#9a9da3;"></div>
<div style="left:1008px;top:146px;width:1px;height:5px;background:#9a9da3;"></div>
<div style="left:1050px;top:146px;width:1px;height:5px;background:#9a9da3;"></div>
<div style="left:1092px;top:146px;width:1px;height:5px;background:#9a9da3;"></div>
<div style="left:1134px;top:141px;width:1px;height:10px;background:#9a9da3;"></div>
<div style="left:1176px;top:146px;width:1px;height:5px;background:#9a9da3;"></div>
<div style="left:1218px;top:146px;width:1px;height:5px;background:#9a9da3;"></div>
<div style="left:1260px;top:146px;width:1px;height:5px;background:#9a9da3;"></div>
<div style="left:1302px;top:146px;width:1px;height:5px;background:#9a9da3;"></div>
<div style="left:1345px;top:138px;width:1px;height:13px;background:#9a9da3;"></div>
<div style="left:1345px;top:136px;width:1px;height:2px;background:#8fb4d6;"></div>
<div style="left:1387px;top:146px;width:1px;height:5px;background:#9a9da3;"></div>
<div style="left:1429px;top:146px;width:1px;height:5px;background:#9a9da3;"></div>
<div style="left:1471px;top:146px;width:1px;height:5px;background:#9a9da3;"></div>
<div style="left:1513px;top:146px;width:1px;height:5px;background:#9a9da3;"></div>
<div style="left:1555px;top:141px;width:1px;height:10px;background:#9a9da3;"></div>
<div style="left:1597px;top:146px;width:1px;height:5px;background:#9a9da3;"></div>
<div style="left:297px;top:178px;width:4px;height:1px;background:#9a9da3;"></div>
<div style="left:297px;top:220px;width:4px;height:1px;background:#9a9da3;"></div>
<div style="left:297px;top:262px;width:4px;height:1px;background:#9a9da3;"></div>
<div style="left:291px;top:304px;width:10px;height:1px;background:#9a9da3;"></div>
<div style="left:297px;top:346px;width:4px;height:1px;background:#9a9da3;"></div>
<div style="left:297px;top:388px;width:4px;height:1px;background:#9a9da3;"></div>
<div style="left:297px;top:430px;width:4px;height:1px;background:#9a9da3;"></div>
<div style="left:297px;top:472px;width:4px;height:1px;background:#9a9da3;"></div>
<div style="left:288px;top:514px;width:13px;height:1px;background:#9a9da3;"></div>
<div style="left:286px;top:514px;width:2px;height:1px;background:#8fb4d6;"></div>
<div style="left:297px;top:556px;width:4px;height:1px;background:#9a9da3;"></div>
<div style="left:297px;top:598px;width:4px;height:1px;background:#9a9da3;"></div>
<div style="left:297px;top:640px;width:4px;height:1px;background:#9a9da3;"></div>
<div style="left:297px;top:682px;width:4px;height:1px;background:#9a9da3;"></div>
<div style="left:291px;top:724px;width:10px;height:1px;background:#9a9da3;"></div>
<div style="left:297px;top:766px;width:4px;height:1px;background:#9a9da3;"></div>
<div style="left:297px;top:808px;width:4px;height:1px;background:#9a9da3;"></div>
<div style="left:297px;top:850px;width:4px;height:1px;background:#9a9da3;"></div>
<div style="left:297px;top:892px;width:4px;height:1px;background:#9a9da3;"></div>
<div style="left:288px;top:935px;width:13px;height:1px;background:#9a9da3;"></div>
<div style="left:286px;top:935px;width:2px;height:1px;background:#8fb4d6;"></div>
<div class="t" style="left:506.5px;top:139.17px;font-size:9.6px;line-height:9.6px;color:#a9abae;font-weight:400;letter-spacing:-0.45px;">-500</div>
<div class="t" style="left:927px;top:139.17px;font-size:9.6px;line-height:9.6px;color:#a9abae;font-weight:400;;">0</div>
<div class="t" style="left:1347.5px;top:139.17px;font-size:9.6px;line-height:9.6px;color:#a9abae;font-weight:400;letter-spacing:-0.45px;">500</div>
<div class="t" style="left:285.5px;top:505px;width:20px;height:12px;font-size:9.6px;line-height:10px;color:#a9abae;transform:rotate(-90deg);transform-origin:center;text-align:center">0</div>
<div class="t" style="left:279.5px;top:922px;width:30px;height:10px;font-size:9.5px;line-height:10px;color:#a9abae;transform:rotate(-90deg);transform-origin:center;text-align:center;letter-spacing:-0.3px">500</div>
<div style="left:925px;top:151px;width:1px;height:357px;background:#74b02a;"></div>
<div style="left:925px;top:523px;width:1px;height:452px;background:#71946e;"></div>
<div style="left:301px;top:515px;width:616px;height:1px;background:#c83a4f;"></div>
<div style="left:933px;top:515px;width:700px;height:1px;background:#a4479e;"></div>
<svg style="left:915px;top:505px;" width="21" height="21" viewBox="0 0 21 21"><path d="M10 2 V18 M2 10 H18" stroke="#fff" stroke-width="4.4"/><path d="M10 2.8 V17.2 M2.8 10 H17.2" stroke="#ff4d4d" stroke-width="2.4"/></svg>
<div style="left:305px;top:968px;width:1313px;height:4px;background:#595959;border-radius:2px;"></div>
<div style="left:377px;top:967px;width:613px;height:6px;background:#8b8b8b;border-radius:3px;"></div>
<div style="left:1626px;top:153px;width:4px;height:806px;background:#595959;border-radius:2px;"></div>
<div style="left:1625px;top:294px;width:6px;height:279px;background:#8b8b8b;border-radius:3px;"></div>
<svg style="left:312.5px;top:161.5px;" width="15" height="15" viewBox="0 0 15 15"><g fill="#e6e6e6"><rect x="5.5" y="5.5" width="4" height="4"/><path d="M4.5 0.5 L7.5 3.2 L10.5 0.5" fill="none" stroke="#e6e6e6" stroke-width="1.5"/><path d="M4.5 14.5 L7.5 11.8 L10.5 14.5" fill="none" stroke="#e6e6e6" stroke-width="1.5"/><path d="M0.5 4.5 L3.2 7.5 L0.5 10.5" fill="none" stroke="#e6e6e6" stroke-width="1.5"/><path d="M14.5 4.5 L11.8 7.5 L14.5 10.5" fill="none" stroke="#e6e6e6" stroke-width="1.5"/></g></svg>
<svg style="left:344.5px;top:162px;" width="15" height="15" viewBox="0 0 15 15"><circle cx="7.5" cy="7.5" r="7" fill="#e6e6e6"/><rect x="3.5" y="6.5" width="8" height="2.2" fill="#2a2a2a"/></svg>
<div class="t" style="left:372.5px;top:162.33px;font-size:14.5px;line-height:14.5px;color:#ececec;font-weight:400;text-shadow:0 0 1px #222;letter-spacing:-0.509px;">84.1 %</div>
<svg style="left:428.5px;top:162px;" width="15" height="15" viewBox="0 0 15 15"><circle cx="7.5" cy="7.5" r="7" fill="#e6e6e6"/><path d="M7.5 3.5 V11.5 M3.5 7.5 H11.5" stroke="#2a2a2a" stroke-width="2.2"/></svg>
<svg style="left:296px;top:1001px;" width="8" height="8" viewBox="0 0 8 8"><circle cx="4" cy="4" r="3.6" fill="#ff5d5d"/></svg>
<svg style="left:1451.5px;top:997.5px;" width="14" height="15" viewBox="0 0 14 15"><path d="M6 0.5 Q10.5 1 11 6 L11.5 10 L13 12 H0.8 Q1.2 10.5 2 9.8 L2.5 5.5 Q3 1.5 6 0.5 Z" fill="#4f5561" transform="rotate(20 7 7)"/><circle cx="6.5" cy="13.2" r="1.6" fill="#4f5561"/></svg>
<svg style="left:1609px;top:998px;" width="14" height="12" viewBox="0 0 14 12"><rect x="0" y="0" width="14" height="2" fill="#e0e0e0"/><g fill="#e0e0e0"><path d="M3.5 3 L7 7 H4.6 V12 H2.4 V7 H0 Z"/><path d="M10.5 3 L14 7 H11.6 V12 H9.4 V7 H7 Z"/></g></svg>
<svg style="left:1900.3px;top:75.1px;" width="5.4" height="17.8" viewBox="0 0 5.4 17.8"><g fill="#8b8e94"><circle cx="2.7" cy="2.7" r="1.7"/><circle cx="2.7" cy="8.9" r="1.7"/><circle cx="2.7" cy="15.100000000000001" r="1.7"/></g></svg>
<svg style="left:1654px;top:109.5px;" width="14" height="15" viewBox="0 0 14 15"><path d="M0.5 0.5 H7.5 L11.5 4.5 V8.5 H8 V14.5 H0.5 Z" fill="#e0e0e0"/><path d="M7.5 0.5 V4.5 H11.5" fill="none" stroke="#363d4a" stroke-width="0.9"/><path d="M10.5 8.5 V14.5 M7.5 11.5 H13.5" stroke="#5fdd6e" stroke-width="2.2"/></svg>
<svg style="left:1685px;top:110px;" width="15" height="14" viewBox="0 0 15 14"><path d="M0.5 2 Q0.5 0.8 1.7 0.8 H5 L6.5 2.5 H11.5 Q12.5 2.5 12.5 3.5 V5 H4 L2 13.5 H1.5 Q0.5 13.5 0.5 12.5 Z" fill="#e0e0e0"/><path d="M4.5 6 H14.5 L12.5 13.5 H2.5 Z" fill="#e0e0e0"/></svg>
<svg style="left:1717px;top:109.5px;" width="14" height="15" viewBox="0 0 14 15"><path d="M0.5 1.8 Q0.5 0.5 1.8 0.5 H10.5 L13.5 3.5 V13.2 Q13.5 14.5 12.2 14.5 H1.8 Q0.5 14.5 0.5 13.2 Z" fill="#7f838b"/><rect x="3.5" y="0.5" width="6" height="4.5" fill="#363d4a"/><rect x="6.5" y="1.2" width="2" height="3" fill="#7f838b"/><circle cx="7" cy="10" r="1.7" fill="#363d4a"/></svg>
<svg style="left:1753px;top:108px;" width="6" height="18" viewBox="0 0 6 18"><g fill="#e0e0e0"><circle cx="3" cy="3" r="2"/><circle cx="3" cy="9" r="2"/><circle cx="3" cy="15" r="2"/></g></svg>
<svg style="left:1838px;top:110px;" width="9" height="14" viewBox="0 0 9 14"><path d="M7 1 L2 7 L7 13" fill="none" stroke="#e0e0e0" stroke-width="1.8"/></svg>
<svg style="left:1861px;top:110px;" width="9" height="14" viewBox="0 0 9 14"><path d="M2 1 L7 7 L2 13" fill="none" stroke="#7d8087" stroke-width="1.8"/></svg>
<svg style="left:1887px;top:110px;" width="15" height="14" viewBox="0 0 15 14"><path d="M3.2 5.5 Q4.5 1.2 8.5 1.2 Q13.8 1.5 13.8 7 Q13.5 12.5 8.5 12.8 Q6 12.8 4.5 11.2" fill="none" stroke="#e0e0e0" stroke-width="2"/><path d="M0.3 4 L3.3 8 L6.3 4.5 Z" fill="#e0e0e0"/><path d="M8.5 4 V7.5 H11" fill="none" stroke="#e0e0e0" stroke-width="1.6"/></svg>
<svg style="left:1651px;top:142px;" width="14" height="14" viewBox="0 0 14 14"><rect x="0" y="0" width="14" height="14" rx="3.5" fill="#8da5f3"/><rect x="3" y="5" width="1.8" height="3.5" fill="#21252d"/><rect x="9.2" y="5" width="1.8" height="3.5" fill="#21252d"/><path d="M4.3 10 Q7 12.4 9.7 10" fill="none" stroke="#21252d" stroke-width="1.5"/></svg>
<svg style="left:1858.5px;top:145px;" width="11" height="8" viewBox="0 0 11 8"><path d="M1 1 L5.5 6.5 L10 1" fill="none" stroke="#e0e0e0" stroke-width="2"/></svg>
<svg style="left:1884px;top:139px;" width="20" height="20" viewBox="0 0 20 20"><circle cx="10.8" cy="5.8" r="3.3" fill="none" stroke="#e0e0e0" stroke-width="1.9"/><path d="M8.4 8.3 L6.3 10.4" stroke="#e0e0e0" stroke-width="2"/><text x="1.8" y="18" font-family="Liberation Sans" font-weight="700" font-size="8.4" fill="#e0e0e0" textLength="15.5" lengthAdjust="spacingAndGlyphs">DOC</text></svg>
<svg style="left:1855px;top:175px;" width="14" height="14" viewBox="0 0 14 14"><circle cx="5.5" cy="5.5" r="4.3" fill="none" stroke="#e0e0e0" stroke-width="2"/><path d="M8.6 8.6 L13 13" stroke="#e0e0e0" stroke-width="2.2" stroke-linecap="round"/></svg>
<svg style="left:1886px;top:174px;" width="16" height="16" viewBox="0 0 16 16"><path d="M4.5 1 L5.3 2.5 V9 H3.7 V2.5 Z" fill="#e0e0e0"/><path d="M1.9 9 H7.1 V12.5 Q7.1 15 4.5 15 Q1.9 15 1.9 12.5 Z" fill="#e0e0e0"/><path d="M9.3 1.5 V3.8 Q9.3 6 11.2 6 Q13.2 6 13.2 3.8 V1.5" fill="none" stroke="#e0e0e0" stroke-width="1.9"/><rect x="10.3" y="5" width="1.9" height="10" fill="#e0e0e0"/></svg>
<div style="left:1650px;top:205px;width:254px;height:24px;background:#3c4049;border-radius:3px;"></div>
<div class="t" style="left:1758px;top:209.45px;font-size:14px;line-height:14px;color:#dfe0e2;font-weight:700;;letter-spacing:0.178px;">Sprite2D</div>
<svg style="left:1737px;top:210px;" width="14" height="14" viewBox="0 0 14 14"><rect x="0" y="0" width="14" height="14" rx="3.5" fill="#8da5f3"/><rect x="3" y="5" width="1.8" height="3.5" fill="#3c4049"/><rect x="9.2" y="5" width="1.8" height="3.5" fill="#3c4049"/><path d="M4.3 10 Q7 12.4 9.7 10" fill="none" stroke="#3c4049" stroke-width="1.5"/></svg>
<div class="t" style="left:1658.6px;top:235.85px;font-size:14px;line-height:14px;color:#a7a9ad;font-weight:400;;letter-spacing:0.268px;">Texture</div>
<div class="t" style="left:1798.8px;top:237.15px;font-size:14px;line-height:14px;color:#cdcfd2;font-weight:400;;letter-spacing:0.359px;">&lt;empty&gt;</div>
<svg style="left:1886px;top:242px;" width="10" height="7" viewBox="0 0 10 7"><path d="M1 1 L5.0 5.5 L9 1" fill="none" stroke="#cdcfd2" stroke-width="1.8"/></svg>
<div style="left:1650px;top:259px;width:254px;height:72px;background:#262a33;"></div>
<svg style="left:1654.8px;top:265.5px;" width="6.2" height="9" viewBox="0 0 6.2 9"><path d="M1 1 L4.7 4.5 L1 8" fill="none" stroke="#9a9ca1" stroke-width="1.8"/></svg>
<div class="t" style="left:1663.8px;top:261.55px;font-size:14px;line-height:14px;color:#dfe0e2;font-weight:700;;letter-spacing:0.341px;">Offset</div>
<svg style="left:1654.8px;top:289.5px;" width="6.2" height="9" viewBox="0 0 6.2 9"><path d="M1 1 L4.7 4.5 L1 8" fill="none" stroke="#9a9ca1" stroke-width="1.8"/></svg>
<div class="t" style="left:1663.8px;top:285.55px;font-size:14px;line-height:14px;color:#dfe0e2;font-weight:700;;letter-spacing:0.472px;">Animation</div>
<svg style="left:1654.8px;top:313.5px;" width="6.2" height="9" viewBox="0 0 6.2 9"><path d="M1 1 L4.7 4.5 L1 8" fill="none" stroke="#9a9ca1" stroke-width="1.8"/></svg>
<div class="t" style="left:1663.8px;top:309.55px;font-size:14px;line-height:14px;color:#dfe0e2;font-weight:700;;letter-spacing:0.041px;">Region</div>
<div style="left:1650px;top:331px;width:254px;height:24px;background:#3c4049;border-radius:3px;"></div>
<div class="t" style="left:1760.3px;top:335.45px;font-size:14px;line-height:14px;color:#dfe0e2;font-weight:700;;letter-spacing:0.316px;">Node2D</div>
<svg style="left:1739px;top:335.5px;" width="14" height="14" viewBox="0 0 14 14"><circle cx="7" cy="7" r="5.3" fill="none" stroke="#8da5f3" stroke-width="2.2"/></svg>
<div style="left:1650px;top:355px;width:254px;height:24px;background:#262a33;"></div>
<svg style="left:1654.8px;top:362.5px;" width="6.2" height="9" viewBox="0 0 6.2 9"><path d="M1 1 L4.7 4.5 L1 8" fill="none" stroke="#9a9ca1" stroke-width="1.8"/></svg>
<div class="t" style="left:1663.8px;top:358.55px;font-size:14px;line-height:14px;color:#dfe0e2;font-weight:700;;letter-spacing:0.315px;">Transform</div>
<div style="left:1650px;top:379px;width:254px;height:24px;background:#3c4049;border-radius:3px;"></div>
<div class="t" style="left:1746.3px;top:383.45px;font-size:14px;line-height:14px;color:#dfe0e2;font-weight:700;;letter-spacing:0.411px;">CanvasItem</div>
<svg style="left:1725px;top:384px;" width="14" height="14" viewBox="0 0 14 14"><path d="M12.5 1 L13.5 2 L6 9.5 L4.5 8 Z" fill="#8a8d93"/><path d="M4 8.5 L5.5 10 Q5 13 1.2 13.2 Q1.4 9.5 4 8.5 Z" fill="#8a8d93"/></svg>
<div style="left:1650px;top:403px;width:254px;height:96px;background:#262a33;"></div>
<svg style="left:1654.8px;top:410.5px;" width="6.2" height="9" viewBox="0 0 6.2 9"><path d="M1 1 L4.7 4.5 L1 8" fill="none" stroke="#9a9ca1" stroke-width="1.8"/></svg>
<div class="t" style="left:1663.8px;top:406.55px;font-size:14px;line-height:14px;color:#dfe0e2;font-weight:700;;letter-spacing:0.237px;">Visibility</div>
<svg style="left:1654.8px;top:434.5px;" width="6.2" height="9" viewBox="0 0 6.2 9"><path d="M1 1 L4.7 4.5 L1 8" fill="none" stroke="#9a9ca1" stroke-width="1.8"/></svg>
<div class="t" style="left:1663.8px;top:430.55px;font-size:14px;line-height:14px;color:#dfe0e2;font-weight:700;;letter-spacing:0.359px;">Ordering</div>
<svg style="left:1654.8px;top:458.5px;" width="6.2" height="9" viewBox="0 0 6.2 9"><path d="M1 1 L4.7 4.5 L1 8" fill="none" stroke="#9a9ca1" stroke-width="1.8"/></svg>
<div class="t" style="left:1663.8px;top:454.55px;font-size:14px;line-height:14px;color:#dfe0e2;font-weight:700;;letter-spacing:0.336px;">Texture</div>
<svg style="left:1654.8px;top:482.5px;" width="6.2" height="9" viewBox="0 0 6.2 9"><path d="M1 1 L4.7 4.5 L1 8" fill="none" stroke="#9a9ca1" stroke-width="1.8"/></svg>
<div class="t" style="left:1663.8px;top:478.55px;font-size:14px;line-height:14px;color:#dfe0e2;font-weight:700;;letter-spacing:0.672px;">Material</div>
<div style="left:1650px;top:499px;width:254px;height:24px;background:#3c4049;border-radius:3px;"></div>
<div class="t" style="left:1769.7px;top:503.45px;font-size:14px;line-height:14px;color:#dfe0e2;font-weight:700;;letter-spacing:0.300px;">Node</div>
<svg style="left:1748px;top:503.5px;" width="14" height="14" viewBox="0 0 14 14"><circle cx="7" cy="7" r="5.3" fill="none" stroke="#e0e0e0" stroke-width="2.2"/></svg>
<div style="left:1650px;top:523px;width:254px;height:48px;background:#262a33;"></div>
<svg style="left:1654.8px;top:530.5px;" width="6.2" height="9" viewBox="0 0 6.2 9"><path d="M1 1 L4.7 4.5 L1 8" fill="none" stroke="#9a9ca1" stroke-width="1.8"/></svg>
<div class="t" style="left:1663.8px;top:526.55px;font-size:14px;line-height:14px;color:#dfe0e2;font-weight:700;;letter-spacing:-0.312px;">Process</div>
<svg style="left:1654.8px;top:554.5px;" width="6.2" height="9" viewBox="0 0 6.2 9"><path d="M1 1 L4.7 4.5 L1 8" fill="none" stroke="#9a9ca1" stroke-width="1.8"/></svg>
<div class="t" style="left:1663.8px;top:550.55px;font-size:14px;line-height:14px;color:#dfe0e2;font-weight:700;;letter-spacing:0.202px;">Editor Description</div>
<div class="t" style="left:1658.4px;top:578.65px;font-size:14px;line-height:14px;color:#a7a9ad;font-weight:400;;letter-spacing:0.134px;">Script</div>
<div class="t" style="left:1798.4px;top:580.15px;font-size:14px;line-height:14px;color:#cdcfd2;font-weight:400;;letter-spacing:0.388px;">&lt;empty&gt;</div>
<svg style="left:1886px;top:584.5px;" width="10" height="7" viewBox="0 0 10 7"><path d="M1 1 L5.0 5.5 L9 1" fill="none" stroke="#cdcfd2" stroke-width="1.8"/></svg>
<div style="left:1687px;top:605px;width:179px;height:29px;background:#2c313b;border-radius:3px;"></div>
<svg style="left:1694px;top:613px;" width="14" height="14" viewBox="0 0 14 14"><path d="M7.0 0 V14 M0 7.0 H14" stroke="#e0e0e0" stroke-width="2"/></svg>
<div class="t" style="left:1741.3px;top:613.65px;font-size:14px;line-height:14px;color:#cdcfd2;font-weight:400;;letter-spacing:0.394px;">Add Metadata</div>
</body></html>
